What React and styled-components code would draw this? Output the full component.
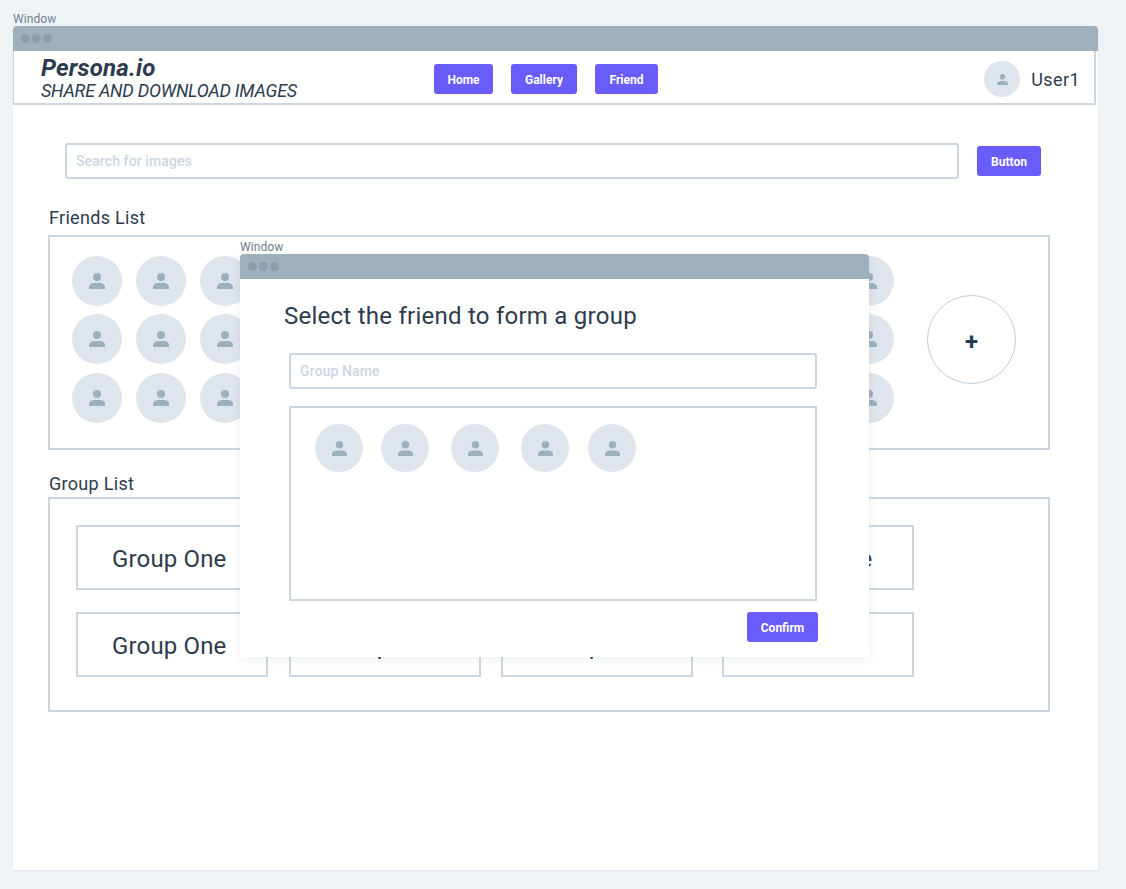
import React from "react";
import styled, { createGlobalStyle } from "styled-components";

const GlobalStyle = createGlobalStyle`
  html, body {
    margin: 0;
    background: #eff3f6;
    font-family: Roboto, "Liberation Sans", sans-serif;
    color: #2d3b4e;
  }
  * { box-sizing: border-box; }
`;

const Page = styled.div`
  position: relative;
  width: 1126px;
  height: 889px;
  padding: 12px 0 0 13px;
  overflow: hidden;
`;

const WindowLabel = styled.div`
  font-size: 12px;
  line-height: 14px;
  letter-spacing: 0.1px;
  color: #6f8090;
`;

const Frame = styled.div`
  width: 1085px;
  height: 844px;
  background: #fff;
  border-radius: 4px 4px 0 0;
  box-shadow: 0 1px 3px rgba(16, 42, 67, 0.06);
`;

const TitleBar = styled.div`
  height: 25px;
  background: #9fb0bd;
  border-radius: 4px 4px 0 0;
  display: flex;
  align-items: center;
  gap: 2px;
  padding-left: 8px;
`;

const Dot = styled.span`
  width: 9px;
  height: 9px;
  border-radius: 50%;
  background: #8c9eae;
`;

const Nav = styled.nav`
  width: 1083px;
  height: 54px;
  display: flex;
  align-items: center;
  padding: 4px 14px 0 27px;
  border: solid #cbd6e2;
  border-width: 0 2px 2px 1px;
`;

const Brand = styled.div`
  width: 393px;
  margin-top: -3px;
  font-style: italic;
`;

const BrandName = styled.div`
  font-size: 24px;
  line-height: 26px;
  font-weight: 700;
  letter-spacing: 0.2px;
`;

const BrandTag = styled.div`
  font-size: 18px;
  line-height: 20px;
  letter-spacing: -0.25px;
`;

const NavLinks = styled.div`
  display: flex;
  gap: 18px;
`;

const Button = styled.button`
  width: ${(p) => p.$w}px;
  height: 30px;
  padding: 1px 0 0;
  border: 0;
  border-radius: 3px;
  background: #6a5cf9;
  color: #fff;
  font: 700 12px Roboto, sans-serif;
`;

const User = styled.div`
  margin-left: auto;
  display: flex;
  align-items: center;
  gap: 11px;
  font-size: 18px;
  letter-spacing: 0.4px;
`;

const Main = styled.main`
  padding: 38px 0 0 35px;
`;

const SearchRow = styled.div`
  display: flex;
  align-items: center;
  gap: 18px;
  margin: 0 0 28px 17px;
`;

const TextInput = styled.input`
  display: block;
  width: ${(p) => p.$w}px;
  height: 36px;
  padding: 0 9px;
  border: 2px solid #cbd6e2;
  border-radius: 3px;
  background: #fff;
  outline: 0;
  font: 500 14px Roboto, sans-serif;
  letter-spacing: 0.1px;
  &::placeholder { color: #cbd6e2; opacity: 1; }
`;

const SectionTitle = styled.h2`
  margin: 0 0 ${(p) => p.$gap}px 1px;
  font-size: 18px;
  line-height: 21px;
  font-weight: 400;
  letter-spacing: 0.3px;
`;

const FriendsBox = styled.section`
  width: 1002px;
  height: 215px;
  margin-bottom: 23px;
  display: flex;
  align-items: flex-start;
  padding: 19px 0 0 22px;
  border: 2px solid #cbd6e2;
`;

const FriendGrid = styled.div`
  width: 822px;
  display: grid;
  grid-template-columns: repeat(3, 64px) repeat(9, 64.44px) 50px;
  grid-template-rows: 58px 59px 50px;
`;

const Circle = styled.div`
  width: ${(p) => p.$size}px;
  height: ${(p) => p.$size}px;
  border-radius: 50%;
  background: #dfe5ed;
  display: flex;
  align-items: center;
  justify-content: center;
  color: #9fb0bd;
`;

const AddButton = styled.div`
  width: 89px;
  height: 89px;
  margin: 39px 0 0 33px;
  border: 1px solid #bccddc;
  border-radius: 50%;
  display: flex;
  align-items: center;
  justify-content: center;
  padding-top: 4px;
  font-size: 24px;
  font-weight: 700;
  color: #243b53;
`;

const GroupBox = styled.section`
  width: 1002px;
  height: 215px;
  padding: 26px 0 0 26px;
  border: 2px solid #cbd6e2;
  display: grid;
  grid-template-columns: 213px 212px 221px 192px;
  grid-auto-rows: 65px;
  row-gap: 22px;
`;

const GroupCard = styled.div`
  width: 192px;
  display: flex;
  align-items: center;
  padding: 3px 0 0 34px;
  border: 2px solid #cbd6e2;
  font-size: 24px;
  letter-spacing: 0.15px;
`;

const Modal = styled.div`
  position: absolute;
  left: 240px;
  top: 240px;
`;

const ModalFrame = styled.div`
  width: 629px;
  height: 403px;
  background: #fff;
  border-radius: 4px 4px 0 0;
  box-shadow: 0 2px 10px rgba(16, 42, 67, 0.08);
`;

const ModalBody = styled.div`
  padding: 23px 0 0 44px;
`;

const ModalTitle = styled.h1`
  margin: 0 0 22px;
  font-size: 24px;
  line-height: 29px;
  font-weight: 400;
  letter-spacing: 0.25px;
`;

const ModalColumn = styled.div`
  width: 529px;
  margin-left: 5px;
`;

const PickBox = styled.div`
  width: 528px;
  height: 195px;
  margin-top: 17px;
  padding: 16px 0 0 24px;
  border: 2px solid #cbd6e2;
  display: grid;
  grid-template-columns: 66px 70px 70px 67px 48px;
  align-content: start;
`;

const ModalActions = styled.div`
  display: flex;
  justify-content: flex-end;
  margin-top: 11px;
`;

const PersonIcon = ({ size = 16 }) => (
  <svg width={size} height={size} viewBox="0 0 16 16" fill="currentColor" aria-hidden="true">
    <circle cx="8" cy="4" r="4" />
    <path d="M0 16v-2c0-2.400 2.800-4 5-4h6c2.200 0 5 1.600 5 4v2z" />
  </svg>
);

const Avatar = ({ size = 50, icon = 16 }) => (
  <Circle $size={size}>
    <PersonIcon size={icon} />
  </Circle>
);

const WindowBar = () => (
  <TitleBar>
    <Dot />
    <Dot />
    <Dot />
  </TitleBar>
);

const friends = Array.from({ length: 39 }, (_, i) => i);
const groups = ["Group One", "Group One", "Group One", "Group One", "Group One", "Group One", "Group One", ""];
const picked = [0, 1, 2, 3, 4];

export default function App() {
  return (
    <Page>
      <GlobalStyle />
      <WindowLabel>Window</WindowLabel>
      <Frame>
        <WindowBar />
        <Nav>
          <Brand>
            <BrandName>Persona.io</BrandName>
            <BrandTag>SHARE AND DOWNLOAD IMAGES</BrandTag>
          </Brand>
          <NavLinks>
            <Button $w={59}>Home</Button>
            <Button $w={66}>Gallery</Button>
            <Button $w={63}>Friend</Button>
          </NavLinks>
          <User>
            <Avatar size={36} icon={11} />
            User1
          </User>
        </Nav>
        <Main>
          <SearchRow>
            <TextInput $w={894} placeholder="Search for images" />
            <Button $w={64}>Button</Button>
          </SearchRow>
          <SectionTitle $gap={7}>Friends List</SectionTitle>
          <FriendsBox>
            <FriendGrid>
              {friends.map((f) => (
                <Avatar key={f} />
              ))}
            </FriendGrid>
            <AddButton>+</AddButton>
          </FriendsBox>
          <SectionTitle $gap={3}>Group List</SectionTitle>
          <GroupBox>
            {groups.map((name, i) => (
              <GroupCard key={i}>{name}</GroupCard>
            ))}
          </GroupBox>
        </Main>
      </Frame>
      <Modal>
        <WindowLabel>Window</WindowLabel>
        <ModalFrame>
          <WindowBar />
          <ModalBody>
            <ModalTitle>Select the friend to form a group</ModalTitle>
            <ModalColumn>
              <TextInput $w={528} placeholder="Group Name" />
              <PickBox>
                {picked.map((p) => (
                  <Avatar key={p} size={48} icon={15} />
                ))}
              </PickBox>
              <ModalActions>
                <Button $w={71}>Confirm</Button>
              </ModalActions>
            </ModalColumn>
          </ModalBody>
        </ModalFrame>
      </Modal>
    </Page>
  );
}
